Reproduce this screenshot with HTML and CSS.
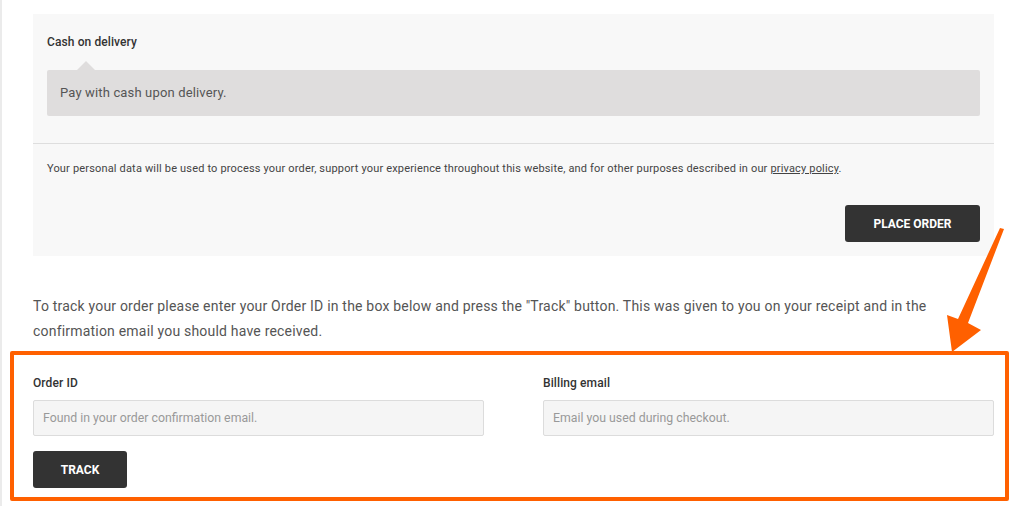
FILE: index.html
```html
<!DOCTYPE html>
<html lang="en">

<head>
    <meta charset="UTF-8">
    <meta name="viewport" content="width=device-width, initial-scale=1.0">
    <title>Track your order</title>
    <link rel="stylesheet" href="styles.css">
</head>

<body>
    <div class="page">
        <div class="payment">
            <div class="methods">
                <div class="method-label">Cash on delivery</div>
                <div class="method-box">Pay with cash upon delivery.</div>
            </div>
            <div class="place-order">
                <p class="terms">Your personal data will be used to process your order, support your experience throughout this website, and for other purposes described in our <a href="#">privacy policy</a>.</p>
                <div class="actions">
                    <button class="btn btn-wide">Place order</button>
                </div>
            </div>
        </div>

        <p class="intro">To track your order please enter your Order ID in the box below and press the "Track" button. This was given to you on your receipt and in the confirmation email you should have received.</p>

        <form class="track-form">
            <div class="fields">
                <div class="field">
                    <label for="orderid">Order ID</label>
                    <input type="text" id="orderid" placeholder="Found in your order confirmation email.">
                </div>
                <div class="field">
                    <label for="email">Billing email</label>
                    <input type="text" id="email" placeholder="Email you used during checkout.">
                </div>
            </div>
            <button type="button" class="btn btn-track">Track</button>
        </form>
    </div>

    <!-- annotation arrow -->
    <svg class="arrow" width="1024" height="506" viewBox="0 0 1024 506">
        <polygon points="1000,228 1004,229 968,323 981,330 952,352 947,315 958,319" fill="#ff6000" />
    </svg>
</body>

</html>
```

FILE: styles.css
```css
body {
    margin: 0;
    font-family: Roboto, "Liberation Sans", sans-serif;
    color: #333;
    background-color: #fff;
    border-left: 2px solid #ebebeb;
    min-height: 506px;
    box-sizing: border-box;
}

.page {
    width: 961px;
    margin-left: 31px;
    padding-top: 14px;
}

.payment {
    background-color: #f8f8f8;
}

.methods {
    padding: 20px 14px 27px;
}

.method-label {
    font-size: 12px;
    font-weight: 500;
    line-height: 16px;
    letter-spacing: 0.1px;
    color: #333;
    margin-bottom: 20px;
}

.method-box {
    position: relative;
    background-color: #dfdddd;
    height: 46px;
    line-height: 46px;
    padding-left: 13px;
    font-size: 13px;
    letter-spacing: 0.15px;
    color: #555;
    border-radius: 2px;
}

.method-box::before {
    content: "";
    position: absolute;
    left: 30px;
    top: -9px;
    border-left: 9px solid transparent;
    border-right: 9px solid transparent;
    border-bottom: 9px solid #dfdddd;
}

.place-order {
    border-top: 1px solid #dedede;
    padding: 17px 14px 14px;
}

.terms {
    margin: 0;
    font-size: 11px;
    line-height: 16px;
    letter-spacing: 0.17px;
    color: #444;
}

.terms a {
    color: #444;
}

.actions {
    display: flex;
    justify-content: flex-end;
    margin-top: 28px;
}

.btn {
    background-color: #333;
    color: #fff;
    border: none;
    border-radius: 3px;
    font-family: Roboto, "Liberation Sans", sans-serif;
    font-size: 12px;
    font-weight: 700;
    text-transform: uppercase;
    cursor: pointer;
}

.btn-wide {
    width: 135px;
    height: 37px;
}

.intro {
    margin: 38px 0 0;
    font-size: 14px;
    line-height: 25px;
    letter-spacing: 0.2px;
    color: #555;
}

.track-form {
    position: relative;
    margin-top: 31px;
}

.track-form::before {
    content: "";
    position: absolute;
    left: -23px;
    right: -15px;
    top: -24px;
    bottom: -13px;
    border: 4px solid #ff6000;
    border-radius: 2px;
    pointer-events: none;
}

.fields {
    display: grid;
    grid-template-columns: 1fr 1fr;
    column-gap: 59px;
}

.field label {
    display: block;
    font-size: 12px;
    font-weight: 500;
    line-height: 16px;
    letter-spacing: 0.1px;
    color: #333;
    margin-bottom: 9px;
}

.field input {
    width: 100%;
    height: 36px;
    box-sizing: border-box;
    padding: 0 9px;
    background-color: #f5f5f5;
    border: 1px solid #dcdcdc;
    border-radius: 2px;
    font-family: Roboto, "Liberation Sans", sans-serif;
    font-size: 12.3px;
    color: #333;
}

.field input::placeholder {
    color: #999;
}

.btn-track {
    margin-top: 15px;
    width: 94px;
    height: 37px;
}

.arrow {
    position: absolute;
    left: 0;
    top: 0;
    pointer-events: none;
}
```
